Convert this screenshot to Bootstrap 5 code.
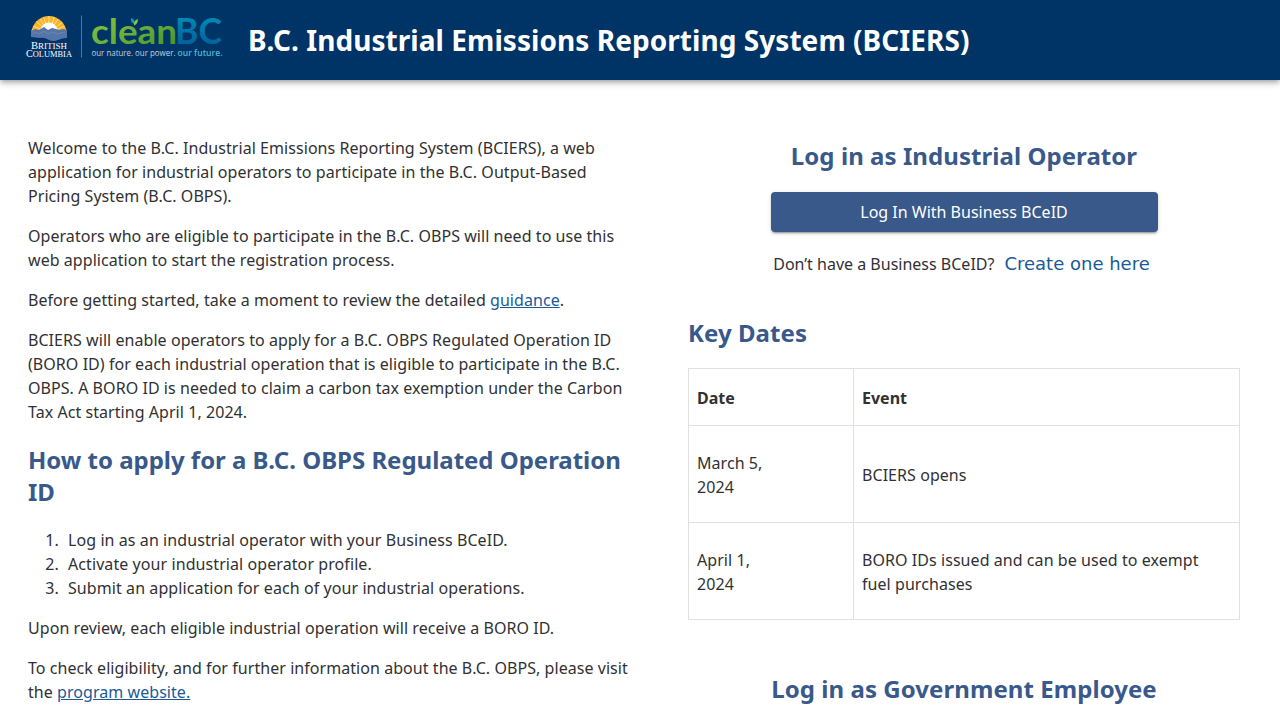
<!DOCTYPE html>
<html lang="en">
<head>
<meta charset="utf-8">
<meta name="viewport" content="width=device-width, initial-scale=1">
<title>B.C. Industrial Emissions Reporting System (BCIERS)</title>
<link href="https://cdn.jsdelivr.net/npm/bootstrap@5.3.0/dist/css/bootstrap.min.css" rel="stylesheet">
<style>
body{font-family:"Noto Sans",sans-serif;color:#313132;overflow:hidden;height:720px}
.site-bar{height:80px;background:#003366;box-shadow:0 2px 4px -1px rgba(0,0,0,.2),0 4px 5px rgba(0,0,0,.14),0 1px 10px rgba(0,0,0,.12);padding:0 24px}
.site-title{font-size:28px;font-weight:700;letter-spacing:.055px;margin:0 0 0 24px;padding-top:2px;white-space:nowrap}
.page-body{padding:56px 40px 0 28px}
.intro{width:606px;letter-spacing:.054px}
.side{width:552px}
.section-title{font-size:24px;line-height:32px;font-weight:700;color:#38598a;margin:20px 0;letter-spacing:.06px}
.intro .section-title{letter-spacing:-.02px}
a{color:#1a5a96}
.steps{padding-left:35px;letter-spacing:.08px}
.steps li{padding-left:5px}
.btn-bceid{width:387px;height:40px;background:#38598a;color:#fff;border-radius:4px;padding:0;box-shadow:0 3px 1px -2px rgba(0,0,0,.2),0 2px 2px rgba(0,0,0,.14),0 1px 5px rgba(0,0,0,.12)}
.create-link{font-family:"DejaVu Sans",sans-serif;font-size:18px;line-height:24px;text-decoration:none;margin-left:10px}
.signup-line{padding-right:5px}
.dates{border-color:#e0e0e0;color:#313132;margin:0}
.dates td{padding:25px 24px 23px 8px;vertical-align:middle;line-height:24px;letter-spacing:.06px}
.dates th{padding:17px 8px 15px;line-height:24px}
.dates tr>:first-child{width:165px}
.key-title{margin:41px 0 19px}
.staff-title{margin-top:53px}
</style>
</head>
<body class="bg-white">
<header class="site-bar d-flex align-items-center text-white">
<svg width="200" height="60" viewBox="24 10 200 60" overflow="visible" role="img" aria-label="British Columbia CleanBC">
<defs>
<linearGradient id="leaf" x1="0" y1="0" x2="1" y2="1"><stop offset="0" stop-color="#8cc63f"/><stop offset=".5" stop-color="#68b03b"/><stop offset="1" stop-color="#458f22"/></linearGradient>
<linearGradient id="sea" x1="0" y1="0" x2="0" y2="1"><stop offset=".2" stop-color="#008db8"/><stop offset=".85" stop-color="#00609c"/></linearGradient>
<clipPath id="dome"><path d="M31 35a18 19 0 0 1 36 0z"/></clipPath>
</defs>
<g clip-path="url(#dome)"><path fill="#f9b52a" d="M31 15h36v20H31z"/>
<path stroke="#fff0b8" stroke-width=".7" d="M49 33 31 30M49 33 31 25M49 33 34 19M49 33 38 16M49 33 43 15M49 33V15M49 33 55 15M49 33 60 16M49 33 65 20M49 33 67 25M49 33 67 30"/>
<circle cx="49" cy="31" r="8.5" fill="#fff"/></g>
<path fill="#5475a7" d="M31 31l4-2 4 1 5-3 4 3 4-2 4 1 3 1 4-1 4 1v8q-5 0-9 2-5 2-9 0-5-3-9-2l-9-1z"/>
<path fill="none" stroke="#8097bd" stroke-width=".5" d="m32 34 3-2 4 2 5-3 4 3 4-2 5 2 8-2"/>
<g fill="#fff" font-family="Liberation Serif,serif"><text x="31" y="48.5" font-size="9.5" textLength="36" lengthAdjust="spacingAndGlyphs">B<tspan font-size="8">RITISH</tspan></text><text x="26" y="56.5" font-size="10" textLength="46" lengthAdjust="spacingAndGlyphs">C<tspan font-size="8.3">OLUMBIA</tspan></text></g>
<path stroke="#587596" d="M81.5 15.5v42"/>
<text x="91" y="44" font-family="Lato,sans-serif" font-size="34" font-weight="700" fill="url(#leaf)" textLength="86" lengthAdjust="spacingAndGlyphs">clean</text>
<text x="175" y="44" font-family="Lato,sans-serif" font-size="37" font-weight="700" fill="url(#sea)" textLength="47" lengthAdjust="spacingAndGlyphs">BC</text>
<path fill="#009eb8" d="M135 24.5q-5-2-4-6.500 4 1 4 6.500"/><path fill="#8cc63f" d="M134 25.500q-1-5 4-6.500 0 5-4 6.500"/>
<g font-family="Open Sans,sans-serif" font-size="8.700"><text x="91.500" y="56" fill="#c3d2e0" textLength="84" lengthAdjust="spacingAndGlyphs">our nature. our power.</text><text x="177.500" y="56" fill="#4db8d3" font-weight="600" textLength="45" lengthAdjust="spacingAndGlyphs">our future.</text></g>
</svg>
<h1 class="site-title">B.C. Industrial Emissions Reporting System (BCIERS)</h1>
</header>
<main class="page-body d-flex justify-content-between">
<section class="intro">
<p>Welcome to the B.C. Industrial Emissions Reporting System (BCIERS), a web application for industrial operators to participate in the B.C. Output-Based Pricing System (B.C. OBPS).</p>
<p>Operators who are eligible to participate in the B.C. OBPS will need to use this web application to start the registration process.</p>
<p>Before getting started, take a moment to review the detailed <a href="#">guidance</a>.</p>
<p>BCIERS will enable operators to apply for a B.C. OBPS Regulated Operation ID (BORO ID) for each industrial operation that is eligible to participate in the B.C. OBPS. A BORO ID is needed to claim a carbon tax exemption under the Carbon Tax Act starting April 1, 2024.</p>
<h2 class="section-title">How to apply for a B.C. OBPS Regulated Operation ID</h2>
<ol class="steps"><li>Log in as an industrial operator with your Business BCeID.</li><li>Activate your industrial operator profile.</li><li>Submit an application for each of your industrial operations.</li></ol>
<p>Upon review, each eligible industrial operation will receive a BORO ID.</p>
<p>To check eligibility, and for further information about the B.C. OBPS, please visit the <a href="#">program website.</a></p>
</section>
<section class="side">
<div class="text-center">
<h2 class="section-title mt-1">Log in as Industrial Operator</h2>
<button class="btn btn-bceid border-0 d-block mx-auto" type="button">Log In With Business BCeID</button>
<div class="signup-line d-flex justify-content-center mt-3 pt-1 text-nowrap"><span>Don’t have a Business BCeID?</span><a class="create-link" href="#">Create one here</a></div>
</div>
<h2 class="section-title key-title">Key Dates</h2>
<table class="table table-bordered dates">
<thead><tr><th>Date</th><th>Event</th></tr></thead>
<tbody><tr><td>March 5,<br>2024</td><td>BCIERS opens</td></tr><tr><td>April 1,<br>2024</td><td>BORO IDs issued and can be used to exempt fuel purchases</td></tr></tbody>
</table>
<h2 class="section-title staff-title text-center">Log in as Government Employee</h2>
</section>
</main>
<script src="https://cdn.jsdelivr.net/npm/bootstrap@5.3.0/dist/js/bootstrap.bundle.min.js"></script>
</body>
</html>
